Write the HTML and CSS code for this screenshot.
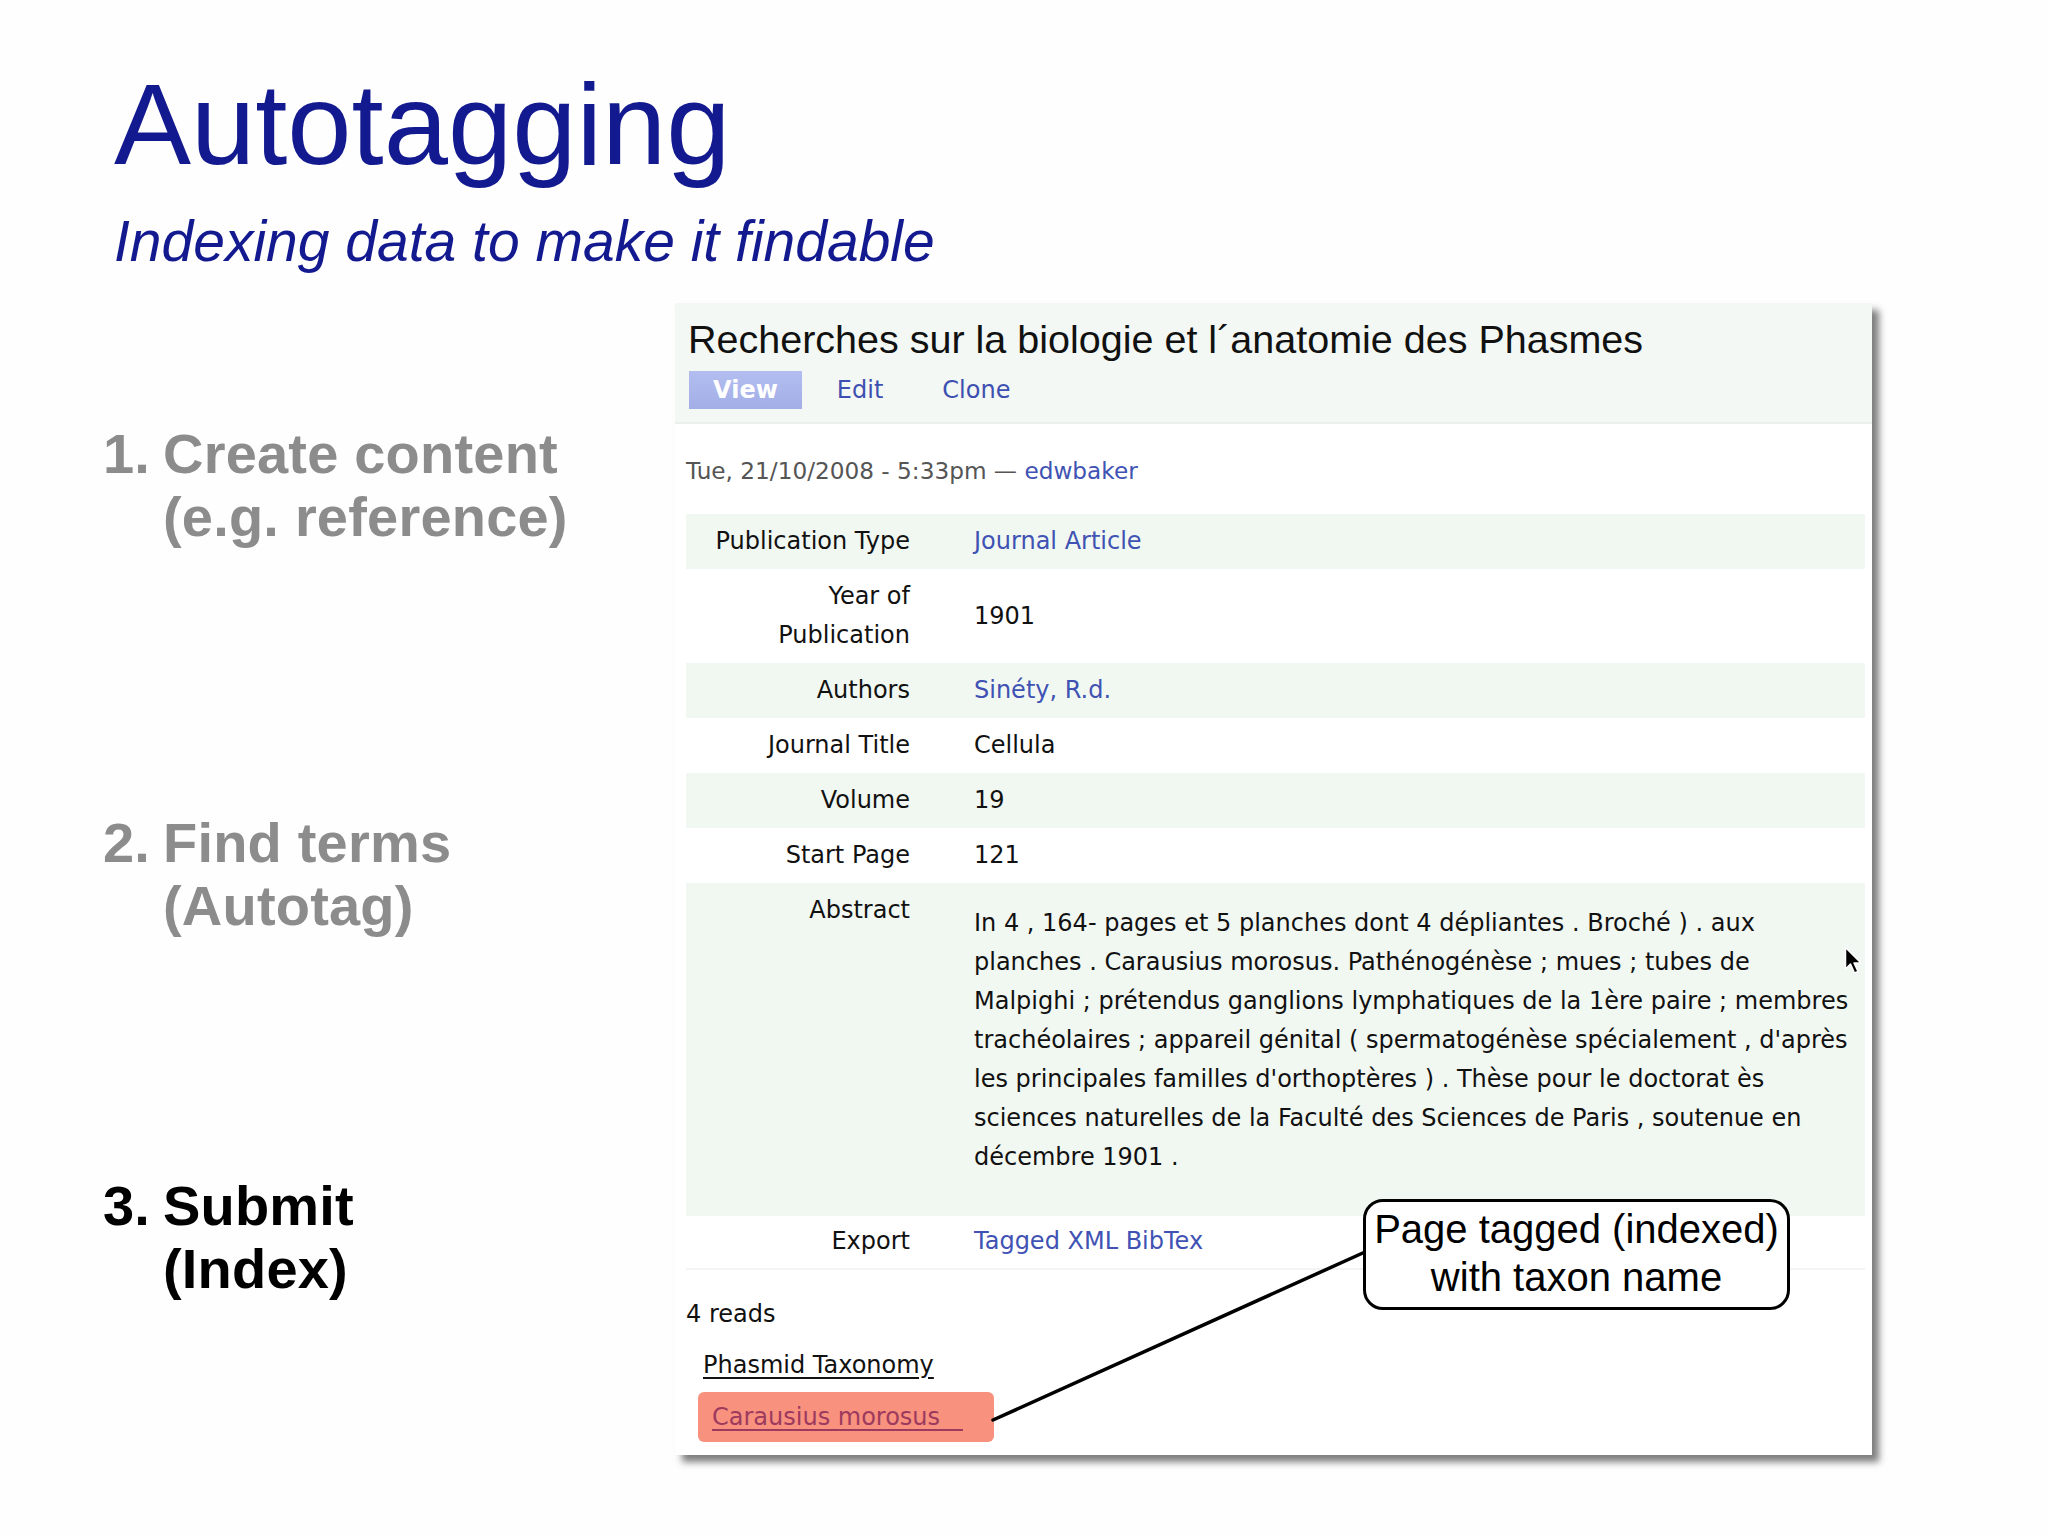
FILE: index.html
```html
<!DOCTYPE html>
<html lang="en">
<head>
<meta charset="utf-8">
<title>Autotagging</title>
<link rel="stylesheet" href="styles.css">
</head>
<body>
<div class="slide">
  <header class="head">
    <h1 class="title">Autotagging</h1>
    <p class="subtitle">Indexing data to make it findable</p>
  </header>
  <div class="main">
    <ol class="steps">
      <li class="step step-1"><span class="num">1.</span><span class="txt">Create content<br>(e.g. reference)</span></li>
      <li class="step step-2"><span class="num">2.</span><span class="txt">Find terms<br>(Autotag)</span></li>
      <li class="step step-3 current"><span class="num">3.</span><span class="txt">Submit<br>(Index)</span></li>
    </ol>
    <div class="panel">
      <div class="panel-head">
        <h2 class="node-title">Recherches sur la biologie et l´anatomie des Phasmes</h2>
        <ul class="tabs">
          <li class="tab active">View</li>
          <li class="tab">Edit</li>
          <li class="tab">Clone</li>
        </ul>
      </div>
      <div class="panel-body">
        <p class="meta">Tue, 21/10/2008 - 5:33pm — <span class="link">edwbaker</span></p>
        <div class="biblio">
          <div class="row odd"><div class="lbl">Publication Type</div><div class="val link">Journal Article</div></div>
          <div class="row"><div class="lbl">Year of<br>Publication</div><div class="val">1901</div></div>
          <div class="row odd"><div class="lbl">Authors</div><div class="val link">Sinéty, R.d.</div></div>
          <div class="row"><div class="lbl">Journal Title</div><div class="val">Cellula</div></div>
          <div class="row odd"><div class="lbl">Volume</div><div class="val">19</div></div>
          <div class="row"><div class="lbl">Start Page</div><div class="val">121</div></div>
          <div class="row odd abstract"><div class="lbl">Abstract</div><div class="val"><p class="abs-text">In 4 , 164- pages et 5 planches dont 4 dépliantes . Broché ) . aux<br>planches . Carausius morosus. Pathénogénèse ; mues ; tubes de<br>Malpighi ; prétendus ganglions lymphatiques de la 1ère paire ; membres<br>trachéolaires ; appareil génital ( spermatogénèse spécialement , d'après<br>les principales familles d'orthoptères ) . Thèse pour le doctorat ès<br>sciences naturelles de la Faculté des Sciences de Paris , soutenue en<br>décembre 1901 .</p></div></div>
          <div class="row export"><div class="lbl">Export</div><div class="val link">Tagged XML BibTex</div></div>
        </div>
        <p class="reads">4 reads</p>
        <ul class="terms">
          <li class="term"><span class="term-link">Phasmid Taxonomy</span></li>
          <li class="term tagged"><span class="term-link">Carausius morosus&nbsp;&nbsp;&nbsp;</span></li>
        </ul>
      </div>
      <svg class="connector" width="1197" height="1152" viewBox="0 0 1197 1152" aria-hidden="true">
        <line x1="318" y1="1117" x2="690" y2="949" stroke="#000" stroke-width="3.5" stroke-linecap="round"/>
      </svg>
      <div class="callout">Page tagged (indexed)<br>with taxon name</div>
      <svg class="cursor" width="20" height="30" viewBox="0 0 20 30" aria-hidden="true">
        <path d="M1.5 1.5 L1.5 23 L6.5 18 L10.5 27 L14 25.5 L10 17 L17 17 Z" fill="#000" stroke="#fff" stroke-width="1.5" stroke-linejoin="round"/>
      </svg>
    </div>
  </div>
</div>
</body>
</html>
```

FILE: styles.css
```css
* { box-sizing: border-box; }
html, body { margin: 0; padding: 0; background: #fff; }
body { width: 2048px; height: 1536px; overflow: hidden; }

.slide {
  width: 2048px;
  height: 1536px;
  background: #fefefe;
  font-family: "Liberation Sans", Arial, sans-serif;
}

.head { padding: 66px 0 0 114px; }
.title {
  margin: 0;
  font-size: 115.5px;
  line-height: 115px;
  font-weight: normal;
  color: #13198f;
}
.subtitle {
  margin: 32px 0 0 0;
  font-size: 57px;
  line-height: 57px;
  font-style: italic;
  color: #13198f;
}

.main {
  display: flex;
  margin-top: 33px;
  padding-left: 103px;
}

.steps {
  list-style: none;
  margin: 0;
  padding: 119px 0 0 0;
  width: 572px;
  flex: none;
}
.step {
  display: flex;
  font-size: 56px;
  line-height: 63px;
  font-weight: bold;
  color: #8c8c8c;
}
.step .num { width: 60px; flex: none; }
.step .txt { letter-spacing: 0.2px; }
.step-2 { margin-top: 263px; }
.step-3 { margin-top: 237px; }
.step.current { color: #000; }

.panel {
  position: relative;
  width: 1197px;
  height: 1152px;
  flex: none;
  background: #fff;
  box-shadow: 7px 7px 7px rgba(40, 40, 40, 0.6);
  font-family: "DejaVu Sans", Verdana, sans-serif;
  font-size: 24px;
  color: #222;
}

.panel-head {
  background: #f3f8f4;
  padding: 12px 8px 13px 13px;
  border-bottom: 2px solid #ebf0ec;
}
.node-title {
  margin: 0;
  font-family: "Liberation Sans", Arial, sans-serif;
  font-size: 39.5px;
  line-height: 48px;
  font-weight: normal;
  color: #111;
}
.tabs {
  list-style: none;
  margin: 8px 0 0 0;
  padding: 0;
  display: flex;
  gap: 11px;
}
.tab {
  height: 38px;
  line-height: 38px;
  padding: 0 24px;
  font-size: 24px;
  color: #3d4fb0;
}
.tab:first-child { margin-left: 1px; }
.tab.active {
  background: linear-gradient(#b3bdf0, #a2aee6);
  color: #fff;
  font-weight: bold;
}

.panel-body { padding: 0 7px 0 11px; }

.link { color: #4052b3; }

.meta {
  margin: 27px 0 0 0;
  font-size: 23.2px;
  line-height: 39px;
  color: #555;
}

.biblio { margin-top: 24px; }
.row {
  display: grid;
  grid-template-columns: 224px 1fr;
  column-gap: 64px;
  padding: 8px 0;
  line-height: 39px;
  align-items: center;
}
.row.odd { background: #f1f8f2; }
.lbl { text-align: right; color: #111; }
.val { color: #111; }
.val.link { color: #4052b3; }
.row.abstract { align-items: start; padding-bottom: 0; }
.abs-text { margin: 13px 0 39px 0; white-space: nowrap; }
.row.export { padding: 6px 0 7px; border-bottom: 2px solid #f2f5f2; }

.reads { margin: 25px 0 0 0; line-height: 39px; color: #111; }

.terms { list-style: none; margin: 12px 0 0 0; padding: 0 0 0 17px; }
.term { line-height: 39px; color: #111; }
.term-link { text-decoration: underline; text-underline-offset: 4px; }
.term.tagged {
  display: inline-block;
  margin: 7px 0 0 -5px;
  padding: 6px 31px 5px 14px;
  background: #f8917e;
  border-radius: 6px;
  color: #9d3a5e;
}

.connector { position: absolute; left: 0; top: 0; pointer-events: none; }

.callout {
  position: absolute;
  left: 688px;
  top: 896px;
  width: 427px;
  height: 111px;
  border: 3px solid #000;
  border-radius: 20px;
  background: #fff;
  font-family: "Liberation Sans", Arial, sans-serif;
  font-size: 40px;
  line-height: 48px;
  text-align: center;
  color: #000;
  padding-top: 3px;
}

.cursor { position: absolute; left: 1169px; top: 643px; }
```
